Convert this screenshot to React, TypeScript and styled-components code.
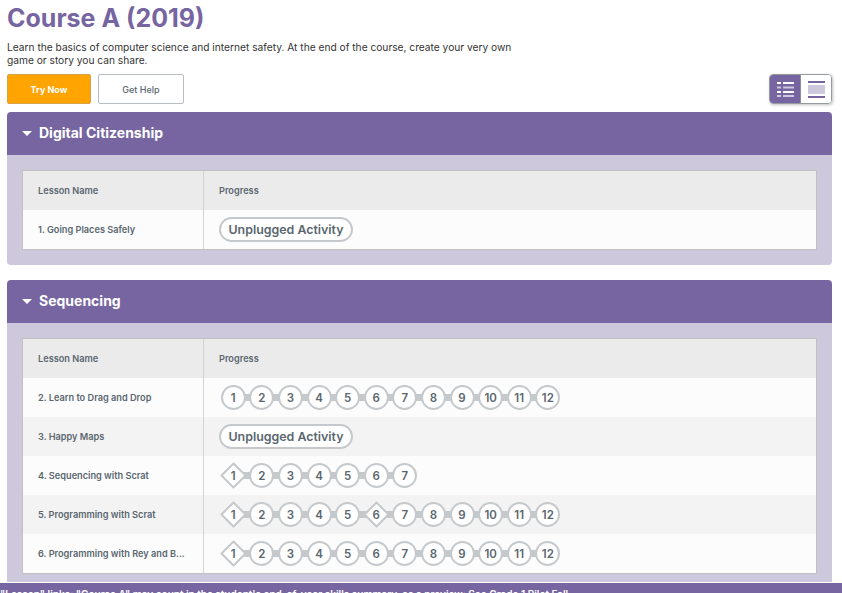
import React from 'react';
import styled, { createGlobalStyle } from 'styled-components';

const Global = createGlobalStyle`
  html, body { margin: 0; padding: 0; height: 593px; overflow: hidden; background: #fff; }
  body { font-family: Inter, "Liberation Sans", sans-serif; color: #4d575f; }
`;
const Page = styled.div`
  position: relative;
  width: 842px;
  height: 593px;
  overflow: hidden;
  box-sizing: border-box;
  padding: 0 10px 0 7px;
`;
const Title = styled.h1`
  margin: 0;
  padding-top: 4px;
  height: 39px;
  box-sizing: border-box;
  font-size: 25px;
  line-height: 28px;
  font-weight: 700;
  color: #7665a0;
`;
const Description = styled.p`
  margin: 2px 0 0;
  width: 525px;
  height: 27px;
  font-size: 10.2px;
  line-height: 13px;
  color: #333;
`;
const ActionRow = styled.div`
  display: flex;
  align-items: flex-start;
  gap: 7px;
  margin-top: 6px;
  height: 38px;
`;
const Button = styled.button<{ $primary?: boolean }>`
  box-sizing: border-box;
  width: ${p => (p.$primary ? '84px' : '86px')};
  height: 30px;
  border-radius: 2px;
  border: 1px solid ${p => (p.$primary ? '#d8a24a' : '#b9bec2')};
  background: ${p => (p.$primary ? '#ffa400' : '#fff')};
  color: ${p => (p.$primary ? '#fff' : '#5b6770')};
  font-family: inherit;
  font-size: 9px;
  font-weight: ${p => (p.$primary ? 700 : 500)};
  padding: 0;
`;
const Toggle = styled.div`
  display: flex;
  margin-left: auto;
  width: 63px;
  height: 30px;
  box-sizing: border-box;
  border-radius: 4px;
  border: 1px solid #969ba0;
  box-shadow: 1px 1px 3px rgba(0,0,0,.25);
  overflow: hidden;
`;
const ToggleSide = styled.div<{ $active?: boolean }>`
  flex: 1;
  display: flex;
  align-items: center;
  justify-content: center;
  background: ${p => (p.$active ? '#7665a0' : '#fff')};
  border-right: ${p => (p.$active ? '1px solid #8d9196' : 'none')};
`;
const Section = styled.section`
  margin-bottom: 15px;
  border-radius: 4px 4px 0 0;
  overflow: hidden;
`;
const SectionHeader = styled.h2`
  margin: 0;
  height: 43px;
  box-sizing: border-box;
  padding: 0 0 2px 15px;
  display: flex;
  align-items: center;
  gap: 7px;
  background: #7665a0;
  color: #fff;
  font-size: 14px;
  font-weight: 700;
`;
const Caret = styled.span`
  width: 0;
  height: 0;
  margin-top: 1px;
  border-left: 5px solid transparent;
  border-right: 5px solid transparent;
  border-top: 5px solid #fff;
`;
const SectionBody = styled.div`
  background: #cdc8dc;
  padding: 15px;
  border-radius: 0 0 4px 4px;
`;
const Table = styled.div`
  border: 1px solid #c1c1c1;
  background: #fff;
`;
const Row = styled.div<{ $kind: 'head' | 'odd' | 'even' }>`
  display: grid;
  grid-template-columns: 181px 1fr;
  height: 39px;
  background: ${p => (p.$kind === 'head' ? '#ebebeb' : p.$kind === 'odd' ? '#fcfcfc' : '#f3f3f3')};
`;
const Cell = styled.div`
  display: flex;
  align-items: center;
  padding-left: 15px;
  font-size: 9.2px;
  font-weight: 600;
  color: #5b6770;
  white-space: nowrap;
  &:first-child {
    border-right: 1px solid #d4d4d4;
  }
`;
const Dots = styled.div`
  display: flex;
  align-items: center;
`;
const Pill = styled.span`
  box-sizing: border-box;
  height: 25px;
  width: 134px;
  border: 2px solid #c5c9cc;
  border-radius: 13px;
  display: flex;
  align-items: center;
  justify-content: center;
  background: #fff;
  font-size: 12.4px;
  font-weight: 600;
  color: #5b6770;
  white-space: nowrap;
`;
const Step = styled.span`
  position: relative;
  width: 28.6px;
  height: 25px;
  display: flex;
  align-items: center;
  justify-content: center;
  flex: none;
  &:not(:last-child)::after {
    content: '';
    position: absolute;
    left: 50%;
    top: 9px;
    width: 100%;
    height: 7px;
    background: #c5c9cc;
  }
`;
const Dot = styled.span<{ $diamond?: boolean }>`
  position: relative;
  z-index: 1;
  box-sizing: border-box;
  width: 25px;
  height: 25px;
  border: ${p => (p.$diamond ? 'none' : '2px solid #c5c9cc')};
  border-radius: 50%;
  background: ${p => (p.$diamond ? 'transparent' : '#fff')};
  display: flex;
  align-items: center;
  justify-content: center;
  font-size: 11.5px;
  font-weight: 600;
  color: #5b6770;
`;
const DiamondShape = styled.svg`
  position: absolute;
  left: -1px;
  top: -1px;
`;
const Num = styled.span`
  position: relative;
`;
const Footer = styled.div`
  position: absolute;
  left: 0;
  right: 0;
  top: 582px;
  height: 11px;
  overflow: hidden;
  border-top: 1px solid #fff;
  box-sizing: border-box;
  background: #7665a0;
  color: #fff;
  font-size: 10px;
  line-height: 23px;
  font-weight: 600;
  white-space: nowrap;
`;

const ListIcon = () => (
  <svg width="17" height="16" viewBox="0 0 17 16">
    <g fill="#fff">
      <rect x="0" y="1" width="4" height="2" />
      <rect x="6" y="1" width="11" height="2" />
      <rect x="0" y="10" width="4" height="2" />
      <rect x="6" y="10" width="11" height="2" />
    </g>
    <g fill="#cdc8dc">
      <rect x="0" y="5.5" width="4" height="2" />
      <rect x="6" y="5.5" width="11" height="2" />
      <rect x="0" y="14" width="4" height="2" />
      <rect x="6" y="14" width="11" height="2" />
    </g>
  </svg>
);
const DetailIcon = () => (
  <svg width="17" height="17" viewBox="0 0 17 17">
    <rect x="0" y="0" width="17" height="2" fill="#7665a0" />
    <rect x="0" y="4" width="17" height="9" fill="#cdc8dc" />
    <rect x="0" y="15" width="17" height="2" fill="#7665a0" />
  </svg>
);

const Steps = ({ count, diamonds = [] }: { count: number; diamonds?: number[] }) => (
  <Dots>
    {Array.from({ length: count }, (_, i) => {
      const d = diamonds.includes(i + 1);
      return (
        <Step key={i}>
          <Dot $diamond={d}>
            {d && (
              <DiamondShape width="27" height="27" viewBox="0 0 27 27">
                <path d="M13.5 1.5 L25.5 13.5 L13.5 25.5 L1.5 13.5 Z" fill="#fff" stroke="#c5c9cc" strokeWidth="2" strokeLinejoin="round" />
              </DiamondShape>
            )}
            <Num>{i + 1}</Num>
          </Dot>
        </Step>
      );
    })}
  </Dots>
);

const lessons = [
  { name: '2. Learn to Drag and Drop', count: 12, diamonds: [] as number[] },
  { name: '3. Happy Maps', count: 0, diamonds: [] },
  { name: '4. Sequencing with Scrat', count: 7, diamonds: [1] },
  { name: '5. Programming with Scrat', count: 12, diamonds: [1, 6] },
  { name: '6. Programming with Rey and B...', count: 12, diamonds: [1] },
];

const Head = () => (
  <Row $kind="head">
    <Cell>Lesson Name</Cell>
    <Cell>Progress</Cell>
  </Row>
);

export default function App() {
  return (
    <Page>
      <Global />
      <Title>Course A (2019)</Title>
      <Description>
        Learn the basics of computer science and internet safety. At the end of the course, create your very own game or story you can share.
      </Description>
      <ActionRow>
        <Button $primary>Try Now</Button>
        <Button>Get Help</Button>
        <Toggle>
          <ToggleSide $active><ListIcon /></ToggleSide>
          <ToggleSide><DetailIcon /></ToggleSide>
        </Toggle>
      </ActionRow>
      <Section>
        <SectionHeader><Caret />Digital Citizenship</SectionHeader>
        <SectionBody>
          <Table>
            <Head />
            <Row $kind="odd">
              <Cell>1. Going Places Safely</Cell>
              <Cell><Pill>Unplugged Activity</Pill></Cell>
            </Row>
          </Table>
        </SectionBody>
      </Section>
      <Section>
        <SectionHeader><Caret />Sequencing</SectionHeader>
        <SectionBody>
          <Table>
            <Head />
            {lessons.map((l, i) => (
              <Row key={l.name} $kind={i % 2 === 0 ? 'odd' : 'even'}>
                <Cell>{l.name}</Cell>
                <Cell>
                  {l.count ? <Steps count={l.count} diamonds={l.diamonds} /> : <Pill>Unplugged Activity</Pill>}
                </Cell>
              </Row>
            ))}
          </Table>
        </SectionBody>
      </Section>
      <Footer>"Lesson" links: "Course A" may count in the student's end-of-year skills summary, as a preview: See Grade 1 Pilot Fall</Footer>
    </Page>
  );
}
